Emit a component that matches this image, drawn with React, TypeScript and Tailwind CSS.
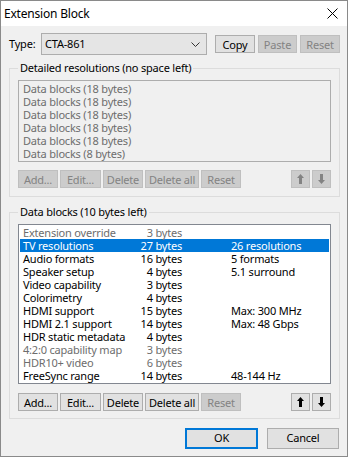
import React from "react";

const font = { fontFamily: '"Noto Sans", "Segoe UI", sans-serif' };

function Btn({ label, w, disabled }: { label: string; w: string; disabled?: boolean }) {
  return (
    <div
      className={`${w} h-[18px] flex items-center justify-center border whitespace-nowrap leading-none ${
        disabled ? "bg-[#cccccc] border-[#bfbfbf] text-[#838383]" : "bg-[#e1e1e1] border-[#adadad] text-black"
      }`}
    >
      {label}
    </div>
  );
}

function Arrow({ up, disabled }: { up: boolean; disabled?: boolean }) {
  const c = disabled ? "#838383" : "#000000";
  return (
    <div
      className={`w-[19px] h-[18px] flex items-center justify-center border ${
        disabled ? "bg-[#cccccc] border-[#bfbfbf]" : "bg-[#e1e1e1] border-[#adadad]"
      }`}
    >
      <svg width="7" height="10" viewBox="0 0 7 10">
        {up ? (
          <path d="M3.5 0 L7 4 L5 4 L5 10 L2 10 L2 4 L0 4 Z" fill={c} />
        ) : (
          <path d="M3.5 10 L7 6 L5 6 L5 0 L2 0 L2 6 L0 6 Z" fill={c} />
        )}
      </svg>
    </div>
  );
}

function Group({ title, children, className }: { title: string; children: React.ReactNode; className?: string }) {
  return (
    <div className={`relative border border-[#dcdcdc] ${className ?? ""}`}>
      <span className="absolute left-[8px] top-[-9px] px-[2px] bg-[#f0f0f0] leading-[16px] text-black whitespace-nowrap">
        {title}
      </span>
      {children}
    </div>
  );
}

const rows: { n: string; b: string; i: string; dim?: boolean; sel?: boolean }[] = [
  { n: "Extension override", b: "3 bytes", i: "", dim: true },
  { n: "TV resolutions", b: "27 bytes", i: "26 resolutions", sel: true },
  { n: "Audio formats", b: "16 bytes", i: "5 formats" },
  { n: "Speaker setup", b: "4 bytes", i: "5.1 surround" },
  { n: "Video capability", b: "3 bytes", i: "" },
  { n: "Colorimetry", b: "4 bytes", i: "" },
  { n: "HDMI support", b: "15 bytes", i: "Max: 300 MHz" },
  { n: "HDMI 2.1 support", b: "14 bytes", i: "Max: 48 Gbps" },
  { n: "HDR static metadata", b: "4 bytes", i: "" },
  { n: "4:2:0 capability map", b: "3 bytes", i: "", dim: true },
  { n: "HDR10+ video", b: "6 bytes", i: "", dim: true },
  { n: "FreeSync range", b: "14 bytes", i: "48-144 Hz" },
];

export default function App() {
  return (
    <div
      className="w-[348px] h-[457px] bg-[#f0f0f0] border border-[#8a8a8a] flex flex-col text-[11px] tracking-[-0.2px] text-black overflow-hidden"
      style={font}
    >
      {/* Title bar */}
      <div className="h-[25px] bg-white flex items-center justify-between pl-[3px] pr-[9px]">
        <span className="text-[12px] leading-none">Extension Block</span>
        <svg width="11" height="11" viewBox="0 0 11 11">
          <path d="M0.5 0.5 L10.5 10.5 M10.5 0.5 L0.5 10.5" stroke="#000" strokeWidth="1" />
        </svg>
      </div>

      {/* Type row */}
      <div className="flex items-center mt-[7px] pl-[8px] h-[22px]">
        <span className="w-[32px]">Type:</span>
        <div className="w-[166px] h-[22px] bg-[#e5e5e5] border border-[#adadad] flex items-center justify-between pl-[3px] pr-[6px]">
          <span>CTA-861</span>
          <svg width="9" height="5" viewBox="0 0 9 5">
            <path d="M0.5 0.5 L4.5 4.5 L8.5 0.5" stroke="#333" strokeWidth="1" fill="none" />
          </svg>
        </div>
        <div className="flex gap-[3px] ml-[8px]">
          <Btn label="Copy" w="w-[40px]" />
          <Btn label="Paste" w="w-[39px]" disabled />
          <Btn label="Reset" w="w-[40px]" disabled />
        </div>
      </div>

      {/* Group 1 */}
      <Group title="Detailed resolutions (no space left)" className="mt-[13px] ml-[8px] w-[331px] pt-[11px] px-[8px] pb-[8px]">
        <div className="h-[82px] border border-[#adadad] bg-[#f0f0f0] pt-[1px] pl-[4px] text-[#6d6d6d] leading-[13px]">
          <div>Data blocks (18 bytes)</div>
          <div>Data blocks (18 bytes)</div>
          <div>Data blocks (18 bytes)</div>
          <div>Data blocks (18 bytes)</div>
          <div>Data blocks (18 bytes)</div>
          <div>Data blocks (8 bytes)</div>
        </div>
        <div className="flex mt-[8px] items-center">
          <div className="flex gap-[2px]">
            <Btn label="Add..." w="w-[40px]" disabled />
            <Btn label="Edit..." w="w-[41px]" disabled />
            <Btn label="Delete" w="w-[40px]" disabled />
            <Btn label="Delete all" w="w-[54px]" disabled />
            <Btn label="Reset" w="w-[40px]" disabled />
          </div>
          <div className="flex gap-[2px] ml-auto">
            <Arrow up disabled />
            <Arrow up={false} disabled />
          </div>
        </div>
      </Group>

      {/* Group 2 */}
      <Group title="Data blocks (10 bytes left)" className="mt-[15px] ml-[8px] w-[331px] pt-[11px] px-[8px] pb-[7px]">
        <div className="h-[160px] border border-[#828790] bg-white pt-[1px] px-[1px] leading-[13px]">
          {rows.map((r) => (
            <div
              key={r.n}
              className={`flex h-[13px] ${r.sel ? "bg-[#0078d7] text-white" : r.dim ? "text-[#6d6d6d]" : "text-black"}`}
            >
              <span className="w-[118px] pl-[3px] whitespace-nowrap">{r.n}</span>
              <span className="w-[44px] text-right whitespace-nowrap">{r.b}</span>
              <span className="pl-[49px] whitespace-nowrap">{r.i}</span>
            </div>
          ))}
        </div>
        <div className="flex mt-[9px] items-center">
          <div className="flex gap-[2px]">
            <Btn label="Add..." w="w-[40px]" />
            <Btn label="Edit..." w="w-[41px]" />
            <Btn label="Delete" w="w-[40px]" />
            <Btn label="Delete all" w="w-[54px]" />
            <Btn label="Reset" w="w-[40px]" disabled />
          </div>
          <div className="flex gap-[2px] ml-auto">
            <Arrow up />
            <Arrow up={false} />
          </div>
        </div>
      </Group>

      {/* Bottom buttons */}
      <div className="flex mt-[9px] pl-[184px] gap-[9px]">
        <div className="w-[73px] h-[21px] border-2 border-[#0078d7] bg-[#e1e1e1] flex items-center justify-center">OK</div>
        <div className="w-[72px] h-[21px] border border-[#adadad] bg-[#e1e1e1] flex items-center justify-center">Cancel</div>
      </div>
    </div>
  );
}
